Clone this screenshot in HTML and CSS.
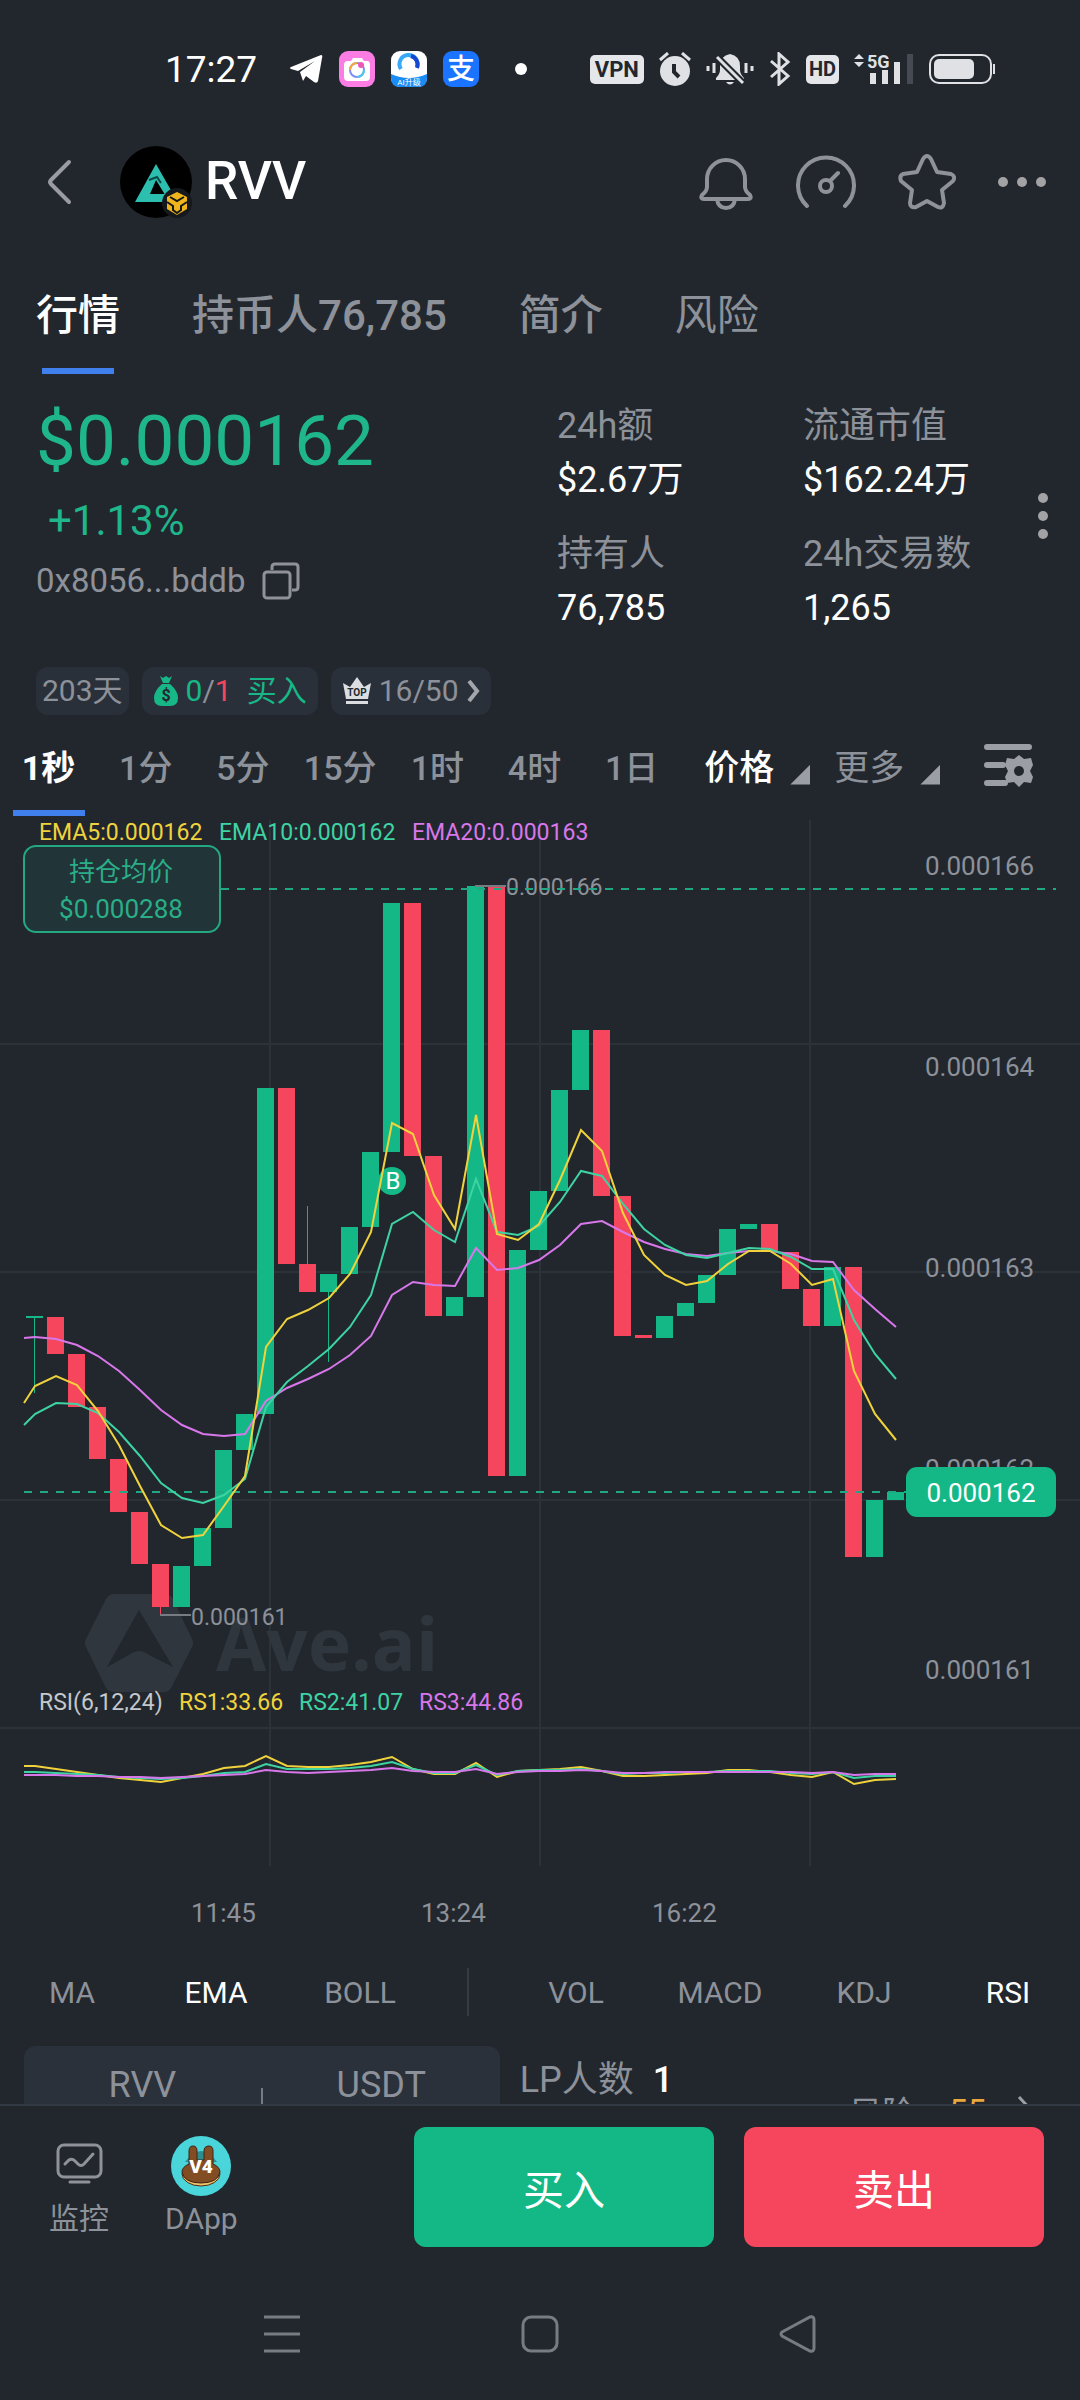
FILE: index.html
```html
<!DOCTYPE html>
<html lang="zh-CN">
<head>
    <meta charset="UTF-8">
    <meta name="viewport" content="width=device-width, initial-scale=1.0">
    <title>RVV</title>
    <link rel="stylesheet" href="styles.css">
</head>
<body>
    <!-- Status bar -->
    <div class="status-bar">
        <span class="clock">17:27</span>
        <div class="status-apps">
            <svg width="34" height="30" viewBox="0 0 34 30"><path d="M2 13 32 1q2 0 1 3l-4 23q-1 3-4 1l-8-6-3 5-3-9L26 7 9 17l-7-2q-2-1 0-2z" fill="#fff"/></svg>
            <svg width="36" height="36" viewBox="0 0 36 36">
                <rect width="36" height="36" rx="9" fill="#fb7de4"/>
                <path d="M5 14q0-4 4-4h3l2-3h9l2 3h3q3 0 3 4v12q0 4-4 4H9q-4 0-4-4z" fill="#fff"/>
                <circle cx="18" cy="19" r="7" fill="none" stroke="#7d8cf5" stroke-width="2"/>
                <path d="M11 19a7 7 0 0 1 7-7" fill="none" stroke="#f5a93d" stroke-width="2"/>
                <path d="M25 19a7 7 0 0 1-7 7" fill="none" stroke="#4dc9e8" stroke-width="2"/>
                <circle cx="22" cy="14" r="3" fill="#ee58b5"/>
            </svg>
            <svg width="36" height="36" viewBox="0 0 36 36">
                <rect width="36" height="36" rx="9" fill="#fff"/>
                <path d="M0 23q18 8 36 0v4q0 9-9 9H9q-9 0-9-9z" fill="#1a8cf4"/>
                <path d="M10 18a9 9 0 1 1 16-2" fill="none" stroke="#36a9f8" stroke-width="4"/>
                <path d="M20 5a9 9 0 0 1 6 12" fill="none" stroke="#1548cf" stroke-width="4"/>
                <text class="app-note" x="18" y="34">AI升级</text>
            </svg>
            <svg width="36" height="36" viewBox="0 0 36 36">
                <rect width="36" height="36" rx="9" fill="#1b74ff"/>
                <text class="app-zhi" x="18" y="28">支</text>
            </svg>
        </div>
        <span class="more-dot"></span>
        <div class="status-icons">
            <span class="vpn">VPN</span>
            <svg width="32" height="34" viewBox="0 0 32 34">
                <circle cx="16" cy="19" r="15" fill="#dfe1e4"/>
                <path d="M1 8 9 1M31 8l-8-7" stroke="#dfe1e4" stroke-width="3"/>
                <path d="M15 12v8l5 5" fill="none" stroke="#22272e" stroke-width="4"/>
            </svg>
            <svg width="48" height="34" viewBox="0 0 48 34">
                <path d="M10 26q4-4 4-8v-4q0-10 10-12 10 2 10 12v4q0 4 4 8v2H10zM20 30h8q-4 5-8 0z" fill="#dfe1e4"/>
                <path d="M11 5 37 31" stroke="#22272e" stroke-width="7"/>
                <path d="M11 5 37 31" stroke="#dfe1e4" stroke-width="3"/>
                <path d="M2 14v5M8 11v10M40 11v10M46 14v5" stroke="#dfe1e4" stroke-width="3"/>
            </svg>
            <svg width="22" height="34" viewBox="0 0 22 34"><path d="m2 9 17 15-9 8V2l9 8L2 25" fill="none" stroke="#dfe1e4" stroke-width="3"/></svg>
            <span class="hd">HD</span>
            <svg width="60" height="34" viewBox="0 0 60 34">
                <path d="m0 7 5-5 5 5zM0 10h10l-5 5z" fill="#dfe1e4"/>
                <text class="net" x="13" y="16">5G</text>
                <path d="M19 21v11M31 18v14M43 10v22" stroke="#dfe1e4" stroke-width="6"/>
                <path d="M56 2v30" stroke="#464b53" stroke-width="6"/>
            </svg>
            <svg width="67" height="30" viewBox="0 0 67 30">
                <rect x="1" y="1" width="61" height="28" rx="9" fill="none" stroke="#dfe1e4" stroke-width="2"/>
                <rect x="5" y="5" width="40" height="20" rx="5" fill="#dfe1e4"/>
                <path d="M65 10v10" stroke="#dfe1e4" stroke-width="2"/>
            </svg>
        </div>
    </div>

    <!-- Token header -->
    <header class="header">
        <button class="icon-btn back" aria-label="返回">
            <svg width="26" height="46" viewBox="0 0 26 46"><path d="M23 3 5 21q-2 2 0 4l18 18" fill="none" stroke="#9a9ca1" stroke-width="4" stroke-linecap="round"/></svg>
        </button>
        <svg class="logo" width="72" height="72" viewBox="0 0 72 72">
            <circle cx="36" cy="36" r="36" fill="#000"/>
            <path d="M36 18 15 56h36l-6-8H30l6-14 11 18 5-6z" fill="#2cbfb0"/>
            <path d="m29 34 8-3 4 6" fill="none" stroke="#0b4a45" stroke-width="2"/>
            <circle cx="57" cy="57" r="15" fill="#15181c"/>
            <path d="m57 46 10 5v12l-10 6-10-6V51z" fill="#f0b51d"/>
            <path d="m50 51 7 4 7-4M47 56l6 4v4l4 3 4-3v-4l6-4" fill="none" stroke="#15181c" stroke-width="2"/>
        </svg>
        <h1 class="symbol">RVV</h1>
        <div class="header-actions">
            <button class="icon-btn" aria-label="提醒">
                <svg width="56" height="56" viewBox="0 0 56 56" fill="none" stroke="#8f9299" stroke-width="4"><path d="M9 25a19 19 0 0 1 38 0v8q0 4 5 8 2 4-2 4H6q-4 0-2-4 5-4 5-8zM19 45q1 9 9 9t9-9" stroke-linejoin="round"/></svg>
            </button>
            <button class="icon-btn" aria-label="仪表">
                <svg width="60" height="56" viewBox="0 0 60 56" fill="none" stroke="#8f9299" stroke-width="4" stroke-linecap="round"><path d="M11 52a28 28 0 1 1 38 0M35 26l7-7"/><circle cx="30" cy="32" r="6"/></svg>
            </button>
            <button class="icon-btn" aria-label="收藏">
                <svg width="58" height="56" viewBox="0 0 58 56" fill="none" stroke="#8f9299" stroke-width="4" stroke-linejoin="round"><path d="M25 5q4-6 8 0l6 13 14 2q5 2 2 7L44 36l2 13q-1 6-6 4l-11-6-11 6q-6 1-6-4l2-13L3 27q-2-5 2-7l14-2z"/></svg>
            </button>
            <button class="icon-btn" aria-label="更多">
                <svg width="48" height="12" viewBox="0 0 48 12" fill="#a3a3a6"><circle cx="5" cy="6" r="5"/><circle cx="24" cy="6" r="5"/><circle cx="43" cy="6" r="5"/></svg>
            </button>
        </div>
    </header>

    <nav class="tabs">
        <a href="#" class="tab active">行情</a>
        <a href="#" class="tab">持币人76,785</a>
        <a href="#" class="tab">简介</a>
        <a href="#" class="tab light">风险</a>
    </nav>

    <!-- Price and stats -->
    <section class="summary">
        <div class="price-block">
            <div class="price">$0.000162</div>
            <div class="change">+1.13%</div>
            <div class="address">
                <span>0x8056...bddb</span>
                <button class="icon-btn" aria-label="复制">
                    <svg width="38" height="38" viewBox="0 0 38 38" fill="none" stroke="#8f9299" stroke-width="3"><rect x="2" y="10" width="26" height="26" rx="3"/><path d="M10 8V5q0-3 3-3h20q3 0 3 3v20q0 3-3 3h-3"/></svg>
                </button>
            </div>
        </div>
        <dl class="stats">
            <div><dt>24h额</dt><dd>$2.67万</dd></div>
            <div><dt>流通市值</dt><dd>$162.24万</dd></div>
            <div><dt>持有人</dt><dd>76,785</dd></div>
            <div><dt>24h交易数</dt><dd>1,265</dd></div>
        </dl>
        <button class="icon-btn" aria-label="更多数据">
            <svg width="12" height="48" viewBox="0 0 12 48" fill="#a3a3a6"><circle cx="6" cy="6" r="5"/><circle cx="6" cy="24" r="5"/><circle cx="6" cy="42" r="5"/></svg>
        </button>
    </section>

    <div class="pills">
        <span class="pill">203天</span>
        <span class="pill">
            <svg width="26" height="32" viewBox="0 0 26 32"><path d="m7 1 3 2 3-2 3 2 3-2-3 7h-6z" fill="#17b787"/><path d="M9 9h8q8 7 8 14 0 8-8 8H9q-8 0-8-8 0-7 8-14z" fill="#17b787"/><text class="bag" x="13" y="26">$</text></svg>
            <span><span class="up">0</span>/<span class="down">1</span></span>
            <span class="up act">买入</span>
        </span>
        <button class="pill">
            <svg width="30" height="30" viewBox="0 0 30 30"><path d="m1 7 7 4 7-10 7 10 7-4-3 16H4zM4 25h22v3H4z" fill="#dcdde0"/><text class="top" x="15" y="20">TOP</text></svg>
            16/50
            <svg width="14" height="26" viewBox="0 0 14 26"><path d="m3 3 8 10-8 10" fill="none" stroke="#a3a6ac" stroke-width="4"/></svg>
        </button>
    </div>

    <!-- Chart intervals -->
    <div class="intervals">
        <button class="interval active">1秒</button>
        <button class="interval">1分</button>
        <button class="interval">5分</button>
        <button class="interval">15分</button>
        <button class="interval">1时</button>
        <button class="interval">4时</button>
        <button class="interval">1日</button>
        <button class="menu white">价格<i class="corner"></i></button>
        <button class="menu">更多<i class="corner"></i></button>
        <button class="icon-btn settings" aria-label="图表设置">
            <svg width="50" height="46" viewBox="0 0 50 46"><path d="M3 4h42M3 22h16M3 40h18" stroke="#9b9ea5" stroke-width="6" stroke-linecap="round"/><path d="m35 12 5 4 7-1 2 7-3 6 3 6-2 6-7-1-5 5-5-5-7 1-2-6 3-6-3-6 2-7 7 1z" fill="#9b9ea5"/><circle cx="35" cy="28" r="5" fill="#22272e"/></svg>
        </button>
    </div>

    <svg id="chart" class="chart" viewBox="0 0 1080 1120">
        <g class="grid">
            <path d="M270 0V1046M540 0V1046M810 0V1046M0 224H1080M0 452H1080M0 680H1080M0 908H1080"/>
        </g>
        <g class="watermark">
            <path d="M114 774h50q6 0 9 5l19 40q2 4 0 8l-21 41q-2 4-7 4h-50q-5 0-8-4l-20-41q-2-4 0-8l20-40q3-5 8-5z"/>
            <path class="cut" d="m139 790 34 57-24-12q-10-8-20 0l-22 12z"/>
            <text x="216" y="851">Ave.ai</text>
        </g>
        <g class="axis">
            <text x="925" y="55">0.000166</text>
            <text x="925" y="256">0.000164</text>
            <text x="925" y="457">0.000163</text>
            <text x="925" y="658">0.000162</text>
            <text x="925" y="859">0.000161</text>
            <text x="191" y="1102">11:45</text>
            <text x="421" y="1102">13:24</text>
            <text x="652" y="1102">16:22</text>
        </g>
        <g id="candles"></g>
        <g class="legend">
            <text class="yellow" x="39" y="20">EMA5:0.000162</text>
            <text class="green" x="219" y="20">EMA10:0.000162</text>
            <text class="pink" x="412" y="20">EMA20:0.000163</text>
            <text class="plain" x="39" y="890">RSI(6,12,24)</text>
            <text class="yellow" x="179" y="890">RS1:33.66</text>
            <text class="green" x="299" y="890">RS2:41.07</text>
            <text class="pink" x="419" y="890">RS3:44.86</text>
        </g>
        <g class="extremes">
            <path d="M475 66H506M160 795H191"/>
            <text x="506" y="75">0.000166</text>
            <text x="191" y="805">0.000161</text>
        </g>
        <path class="dashed" d="M221 69H1056M24 672H907"/>
        <circle cx="392" cy="361" r="14" class="up-fill"/>
        <text class="buy-mark" x="393" y="369">B</text>
        <g id="lines"></g>
        <g class="avg">
            <rect x="24" y="26" width="196" height="86" rx="12"/>
            <text x="121" y="61">持仓均价</text>
            <text x="121" y="98">$0.000288</text>
        </g>
        <g class="last">
            <rect x="906" y="647" width="150" height="50" rx="11"/>
            <text x="981" y="682">0.000162</text>
        </g>
    </svg>

    <div class="indicators">
        <button>MA</button>
        <button class="white">EMA</button>
        <button>BOLL</button>
        <span class="divider"></span>
        <button>VOL</button>
        <button>MACD</button>
        <button>KDJ</button>
        <button class="white">RSI</button>
    </div>

    <section class="pool">
        <div class="pair">
            <span>RVV</span>
            <span class="pair-line"></span>
            <span>USDT</span>
        </div>
        <div class="lp">LP人数 <b>1</b></div>
        <a href="#" class="risk">
            风险 <span class="score">55</span>
            <svg width="20" height="34" viewBox="0 0 20 34"><path d="m3 3 13 14L3 31" fill="none" stroke="#9b9ea5" stroke-width="3"/></svg>
        </a>
    </section>

    <footer class="bottom-bar">
        <a href="#" class="tool">
            <svg width="60" height="60" viewBox="0 0 60 60" fill="none" stroke="#8f9299" stroke-width="3" stroke-linecap="round"><rect x="9" y="9" width="43" height="32" rx="6"/><path d="M21 46h19M16 28l4-4q3-2 6 1l3 3q3 3 6 0l9-10"/></svg>
            监控
        </a>
        <a href="#" class="tool">
            <svg width="60" height="60" viewBox="0 0 60 60">
                <circle cx="30" cy="30" r="30" fill="#49d5da"/>
                <path d="M14 26q16-22 32 0z" fill="#2b8f92"/>
                <ellipse cx="30" cy="38" rx="19" ry="12" fill="#f0c26a" stroke="#4a2b18" stroke-width="1"/>
                <path d="M18 28V15q0-5 4-5t4 5v9h7v-9q0-5 5-5 4 0 4 5v13q7 3 7 8-2 11-19 11T11 36q0-5 7-8z" fill="#834d23" stroke="#3d2414" stroke-width="1"/>
                <text class="v4" x="30" y="37">V4</text>
            </svg>
            DApp
        </a>
        <div class="trade">
            <button class="buy">买入</button>
            <button class="sell">卖出</button>
        </div>
    </footer>

    <nav class="system-nav">
        <button class="icon-btn" aria-label="任务"><svg width="38" height="38" viewBox="0 0 38 38"><path d="M1 2h36M1 19h36M1 36h36" stroke="#777b82" stroke-width="3"/></svg></button>
        <button class="icon-btn" aria-label="主页"><svg width="38" height="38" viewBox="0 0 38 38"><rect x="2" y="2" width="34" height="34" rx="8" fill="none" stroke="#777b82" stroke-width="3"/></svg></button>
        <button class="icon-btn" aria-label="后退"><svg width="38" height="38" viewBox="0 0 38 38"><path d="M3 17 31 2q4-1 4 3v28q0 4-4 3L3 21q-2-2 0-4z" fill="none" stroke="#777b82" stroke-width="3"/></svg></button>
    </nav>

    <script>
        var svgNS = "http://www.w3.org/2000/svg";
        var step = 21;
        var firstX = 34;

        // [direction, body top, body bottom, wick top, wick bottom]
        var candles = [
            ["up", 496, 498, 497, 573], ["down", 497, 534], ["down", 534, 587], ["down", 587, 639],
            ["down", 639, 692], ["down", 692, 744], ["down", 744, 787, 744, 796], ["up", 746, 787],
            ["up", 708, 746], ["up", 630, 708], ["up", 594, 630], ["up", 268, 594],
            ["down", 268, 444], ["down", 444, 472, 386, 472], ["up", 454, 472, 454, 542], ["up", 407, 454],
            ["up", 332, 407], ["up", 83, 332], ["down", 83, 336], ["down", 336, 496],
            ["up", 477, 496], ["up", 66, 477], ["down", 66, 656], ["up", 430, 656],
            ["up", 371, 430], ["up", 270, 371], ["up", 210, 270], ["down", 210, 376],
            ["down", 376, 516], ["down", 515, 518], ["up", 496, 518], ["up", 483, 496],
            ["up", 455, 483], ["up", 409, 455], ["up", 404, 409], ["down", 404, 432],
            ["down", 432, 469], ["down", 469, 506], ["up", 447, 506], ["down", 447, 737],
            ["up", 680, 737], ["up", 672, 680]
        ];

        // The first value of each line sits on the left edge of the plot
        var lines = {
            ema20: [518, 517, 519, 525, 536, 551, 570, 590, 605, 614, 616, 614, 581, 568, 559, 549, 535, 516, 475, 462, 465, 466, 428, 450, 448, 440, 425, 404, 401, 412, 422, 429, 434, 436, 433, 431, 431, 434, 441, 442, 470, 489, 507],
            ema10: [605, 594, 583, 584, 593, 612, 636, 663, 678, 683, 675, 659, 587, 562, 546, 529, 507, 475, 404, 392, 410, 422, 359, 412, 415, 406, 382, 351, 356, 384, 409, 425, 435, 438, 433, 428, 429, 437, 449, 449, 500, 534, 559],
            ema5: [583, 566, 556, 565, 591, 625, 666, 705, 718, 715, 686, 656, 527, 499, 490, 478, 454, 412, 303, 314, 375, 409, 295, 414, 420, 404, 360, 310, 331, 393, 435, 455, 465, 461, 444, 431, 431, 444, 465, 459, 551, 594, 620],
            rs1: [946, 946, 949, 952, 955, 958, 960, 962, 958, 954, 948, 946, 936, 946, 947, 947, 945, 942, 937, 949, 954, 954, 943, 957, 951, 950, 949, 947, 951, 956, 956, 955, 954, 953, 950, 950, 952, 955, 957, 952, 964, 960, 959],
            rs2: [952, 952, 953, 954, 955, 957, 958, 959, 958, 956, 953, 952, 944, 949, 949, 949, 948, 946, 942, 949, 953, 953, 945, 955, 951, 950, 950, 949, 951, 954, 953, 953, 952, 952, 951, 951, 951, 953, 954, 952, 958, 956, 956],
            rs3: [955, 955, 955, 956, 956, 957, 957, 958, 957, 956, 955, 954, 950, 952, 953, 952, 951, 950, 948, 951, 952, 952, 949, 954, 952, 951, 951, 950, 951, 953, 953, 952, 952, 952, 952, 952, 952, 952, 953, 952, 955, 954, 954]
        };

        function addRect(parent, x, y, width, height, className) {
            var rect = document.createElementNS(svgNS, "rect");
            rect.setAttribute("x", x);
            rect.setAttribute("y", y);
            rect.setAttribute("width", width);
            rect.setAttribute("height", height);
            rect.setAttribute("class", className);
            parent.appendChild(rect);
        }

        var candleGroup = document.getElementById("candles");
        candles.forEach(function(c, i) {
            var x = firstX + i * step;
            addRect(candleGroup, x - 8, c[1], 17, c[2] - c[1], c[0] + "-fill");
            if (c.length > 3) {
                addRect(candleGroup, x, c[3], 1, c[4] - c[3], c[0] + "-fill");
            }
        });

        var lineGroup = document.getElementById("lines");
        Object.keys(lines).forEach(function(name) {
            var points = lines[name].map(function(y, i) {
                var x = i === 0 ? 24 : firstX + 1 + (i - 1) * step;
                return x + "," + y;
            });
            var line = document.createElementNS(svgNS, "polyline");
            line.setAttribute("points", points.join(" "));
            line.setAttribute("class", name);
            lineGroup.appendChild(line);
        });
    </script>
</body>
</html>
```

FILE: styles.css
```css
* {
    box-sizing: border-box;
}
body {
    margin: 0;
    background-color: #22272e;
    color: #8d9199;
    font-family: Roboto, "Noto Sans CJK SC", sans-serif;
    font-size: 30px;
}
button {
    background: none;
    border: 0;
    padding: 0;
    margin: 0;
    color: inherit;
    font: inherit;
    cursor: pointer;
}
a {
    color: inherit;
    text-decoration: none;
}
svg {
    display: block;
    flex-shrink: 0;
}
.icon-btn {
    display: flex;
    align-items: center;
}

/* Status bar */
.status-bar {
    display: flex;
    align-items: center;
    height: 138px;
    padding: 0 84px 0 165px;
}
.clock {
    color: #fff;
    font-size: 37px;
}
.status-apps {
    display: flex;
    align-items: center;
    gap: 16px;
    margin-left: 32px;
}
.app-note {
    fill: #fff;
    font-size: 8px;
    text-anchor: middle;
}
.app-zhi {
    fill: #fff;
    font-size: 28px;
    font-weight: 500;
    text-anchor: middle;
}
.more-dot {
    width: 12px;
    height: 12px;
    margin-left: 36px;
    border-radius: 50%;
    background-color: #fff;
}
.status-icons {
    display: flex;
    align-items: center;
    gap: 15px;
    margin-left: auto;
}
.vpn,
.hd {
    border-radius: 5px;
    background-color: #e4e6e9;
    color: #22272e;
    font-size: 22px;
    font-weight: 700;
    line-height: 29px;
    padding: 0 5px;
}
.hd {
    font-size: 20px;
    padding: 0 3px;
}
.net {
    fill: #dfe1e4;
    font-size: 18px;
    font-weight: 700;
}

/* Header */
.header {
    display: flex;
    align-items: center;
    height: 88px;
    padding: 0 34px 0 46px;
}
.logo {
    margin-left: 48px;
}
.symbol {
    margin: 0 0 0 13px;
    color: #fff;
    font-size: 53px;
    font-weight: 500;
    line-height: 60px;
    padding-bottom: 2px;
}
.header-actions {
    display: flex;
    align-items: center;
    gap: 42px;
    margin-left: auto;
}

/* Page tabs */
.tabs {
    display: flex;
    gap: 72px;
    padding: 0 36px;
}
.tab {
    position: relative;
    height: 148px;
    padding-top: 60px;
    font-size: 42px;
    font-weight: 500;
    line-height: 60px;
}
.tab.light {
    font-weight: 400;
}
.tab.active {
    color: #fff;
}
.tab.active::after,
.interval.active::after {
    content: "";
    position: absolute;
    left: 50%;
    bottom: 0;
    width: 72px;
    height: 6px;
    margin-left: -36px;
    background-color: #4080ec;
}

/* Price and stats */
.summary {
    display: flex;
    align-items: flex-start;
    padding: 27px 31px 0 36px;
}
.price-block {
    flex: 1;
}
.price {
    color: #1eb68a;
    font-size: 71px;
    line-height: 80px;
}
.change {
    margin: 16px 0 0 12px;
    color: #1eb68a;
    font-size: 42px;
    line-height: 48px;
}
.address {
    display: flex;
    align-items: center;
    gap: 16px;
    margin-top: 14px;
    font-size: 33px;
    line-height: 44px;
}
.stats {
    display: grid;
    grid-template-columns: 246px 234px;
    row-gap: 24px;
    margin: 0;
    font-size: 36px;
    line-height: 50px;
}
.stats dd {
    margin: 4px 0 0;
    color: #fff;
}
.summary > .icon-btn {
    height: 230px;
}

/* Info pills */
.pills {
    display: flex;
    gap: 13px;
    padding: 34px 36px 0;
}
.pill {
    display: flex;
    align-items: center;
    gap: 7px;
    height: 48px;
    padding: 0 11px;
    border-radius: 12px;
    background-color: #2a303a;
    color: #8d9199;
    line-height: 48px;
}
.pill:first-child {
    padding: 0 6px;
}
.act {
    margin-left: 8px;
}
.bag {
    fill: #22272e;
    font-size: 16px;
    font-weight: 700;
    text-anchor: middle;
}
.top {
    fill: #22272e;
    font-size: 10px;
    font-weight: 700;
    text-anchor: middle;
}
.up {
    color: #17b787;
}
.down {
    color: #f6465d;
}
.white {
    color: #fff;
}

/* Chart intervals */
.intervals {
    display: flex;
    align-items: flex-start;
    height: 101px;
}
.interval {
    position: relative;
    flex: 0 0 9%;
    height: 101px;
    font-size: 34px;
    font-weight: 500;
}
.interval.active {
    color: #fff;
    font-weight: 700;
}
.menu {
    display: flex;
    align-items: center;
    gap: 16px;
    height: 101px;
    margin-left: 24px;
    padding-bottom: 2px;
    font-size: 35px;
}
.menu.white {
    font-weight: 500;
}
.corner {
    width: 20px;
    height: 20px;
    margin-top: 20px;
    background-color: #9b9ea5;
    clip-path: polygon(100% 0, 100% 100%, 0 100%);
}
.settings {
    height: 101px;
    margin: 0 46px 0 auto;
}

/* Chart */
.chart {
    width: 100%;
    height: auto;
    margin-top: 4px;
    font-size: 26px;
}
.grid path {
    stroke: #2c323a;
    stroke-width: 2;
}
.watermark {
    fill: #30363e;
    font-family: "Open Sans", sans-serif;
    font-size: 73px;
    font-weight: 700;
}
.watermark .cut {
    fill: #22272e;
}
.axis {
    fill: #8d9199;
}
.up-fill {
    fill: #14b886;
}
.down-fill {
    fill: #f6465d;
}
.legend,
.extremes {
    font-size: 23px;
}
.extremes {
    fill: #8d9199;
    stroke-width: 2;
}
.extremes path {
    stroke: #777b82;
}
.extremes text {
    stroke: none;
}
.yellow {
    fill: #f0d33c;
}
.green {
    fill: #3ed3a3;
}
.pink {
    fill: #d877ea;
}
.plain {
    fill: #c5c8cc;
}
.dashed {
    stroke: #1fa883;
    stroke-width: 2;
    stroke-dasharray: 8 8;
}
.buy-mark {
    fill: #fff;
    font-size: 24px;
    text-anchor: middle;
}
#lines polyline {
    fill: none;
    stroke-width: 2;
}
#lines .ema5,
#lines .rs1 {
    stroke: #f0d33c;
}
#lines .ema10,
#lines .rs2 {
    stroke: #3ed3a3;
}
#lines .ema20,
#lines .rs3 {
    stroke: #d877ea;
}
.avg,
.last {
    text-anchor: middle;
}
.avg rect {
    fill: #213437;
    stroke: #23a882;
    stroke-width: 2;
}
.avg text {
    fill: #2aae88;
}
.last rect {
    fill: #14b886;
}
.last text {
    fill: #fff;
}

/* Indicator switches */
.indicators {
    display: grid;
    grid-template-columns: 2fr 2fr 2fr 1fr 2fr 2fr 2fr 2fr;
    align-items: center;
    height: 106px;
    padding-bottom: 2px;
}
.divider {
    justify-self: center;
    width: 2px;
    height: 48px;
    background-color: #353a43;
}

/* Pool info */
.pool {
    display: flex;
    height: 58px;
    padding: 0 44px 0 24px;
    font-size: 36px;
    overflow: hidden;
}
.pair {
    display: grid;
    grid-template-columns: 1fr 2px 1fr;
    width: 47%;
    height: 120px;
    border-radius: 12px;
    background-color: #2a313b;
    line-height: 78px;
    text-align: center;
}
.pair-line {
    height: 36px;
    margin-top: 42px;
    background-color: #777b82;
}
.lp {
    margin-left: 20px;
    line-height: 68px;
}
.lp b {
    margin-left: 10px;
    color: #fff;
    font-weight: 500;
}
.risk {
    display: flex;
    align-items: center;
    height: 50px;
    margin: 40px 0 0 auto;
    font-size: 33px;
}
.score {
    margin: 0 30px 0 34px;
    color: #e8a83c;
}

/* Bottom bar */
.bottom-bar {
    display: flex;
    align-items: flex-start;
    height: 164px;
    padding: 21px 36px 0 49px;
    border-top: 2px solid #333942;
}
.tool {
    display: flex;
    flex-direction: column;
    align-items: center;
    gap: 2px;
    padding-top: 9px;
    margin-right: 56px;
    line-height: 42px;
}
.v4 {
    fill: #fff;
    font-size: 19px;
    font-weight: 900;
    text-anchor: middle;
}
.trade {
    display: flex;
    gap: 30px;
    width: 630px;
    margin-left: auto;
}
.trade button {
    flex: 1;
    height: 120px;
    border-radius: 12px;
    background-color: #14b886;
    color: #fff;
    font-size: 41px;
}
.trade .sell {
    background-color: #f6465d;
}

/* System navigation */
.system-nav {
    display: flex;
    justify-content: center;
    gap: 220px;
    padding: 47px 0;
}
```
